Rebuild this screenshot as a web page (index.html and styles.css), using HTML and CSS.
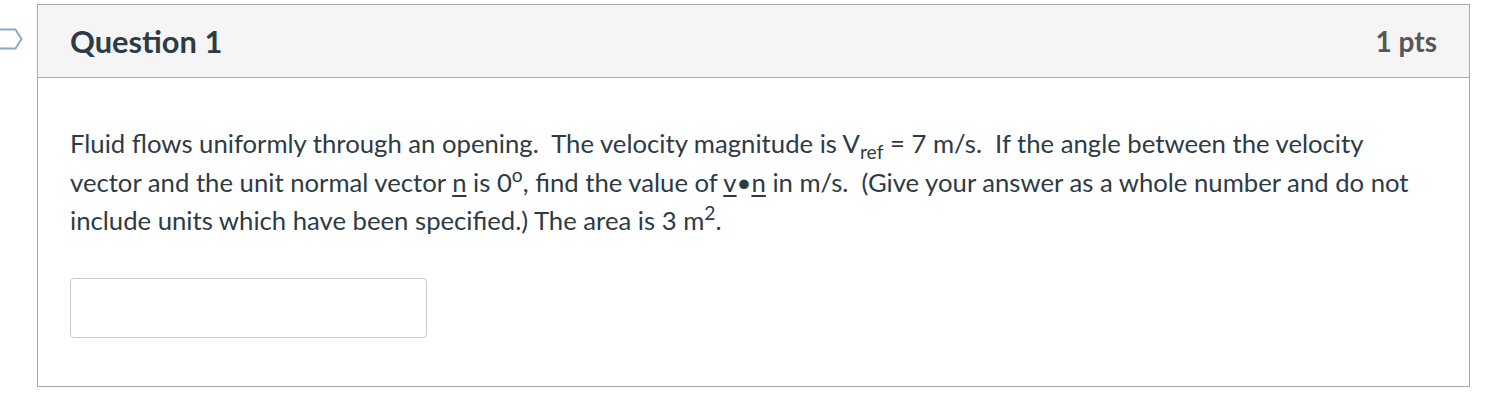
FILE: index.html
```html
<!DOCTYPE html>
<html>
<head>
<meta charset="utf-8">
<link rel="stylesheet" href="styles.css">
</head>
<body>
<div class="page">
  <div class="marker">
    <svg width="24" height="22" viewBox="0 0 24 22"><path d="M-2 1.5 H15.5 L21.5 11 L15.5 20.5 H-2" fill="#fff" stroke="#8ea9c1" stroke-width="2" stroke-linejoin="round"/></svg>
  </div>
  <div class="card">
    <div class="card-header">
      <h2 class="title">Question 1</h2>
      <div class="points">1 pts</div>
    </div>
    <div class="card-body">
      <p class="text">Fluid flows uniformly through an opening.&nbsp; The velocity magnitude is V<sub>ref</sub> = 7 m/s.&nbsp; If the angle between the velocity vector and the unit normal vector <u>n</u> is 0<sup>o</sup>, find the value of <u>v</u>•<u>n</u> in m/s.&nbsp; (Give your answer as a whole number and do not include units which have been specified.) The area is 3 m<sup>2</sup>.</p>
      <input class="answer" type="text">
    </div>
  </div>
</div>
</body>
</html>
```
FILE: styles.css
```css
html, body {
  margin: 0;
  padding: 0;
  background: #fff;
}
body {
  font-family: Lato, "Noto Sans", sans-serif;
  color: #2d3b45;
}
.page {
  display: flex;
  padding-top: 4px;
}
.marker {
  width: 37px;
  flex: none;
  padding-top: 24px;
}
.marker svg {
  display: block;
}
.card {
  width: 1431px;
  border: 1px solid #a8a8a8;
  flex: none;
}
.card-header {
  height: 72px;
  background: #f5f5f5;
  border-bottom: 1px solid #a8a8a8;
  display: flex;
  align-items: center;
  justify-content: space-between;
  padding: 0 32px;
}
.title {
  margin: 0;
  font-size: 30.8px;
  font-weight: 700;
  color: #2d3b45;
}
.points {
  font-size: 28px;
  font-weight: 700;
  color: #565656;
}
.card-body {
  padding: 46px 32px 48px;
}
.text {
  margin: 0;
  font-size: 25.7px;
  line-height: 38.5px;
}
.text sub, .text sup {
  font-size: 75%;
  line-height: 0;
}
.text u {
  text-underline-offset: 3px;
}
.answer {
  display: block;
  margin-top: 38px;
  width: 357px;
  height: 60px;
  box-sizing: border-box;
  border: 1px solid #c8c8c8;
  border-radius: 4px;
  background: #fff;
}
```
